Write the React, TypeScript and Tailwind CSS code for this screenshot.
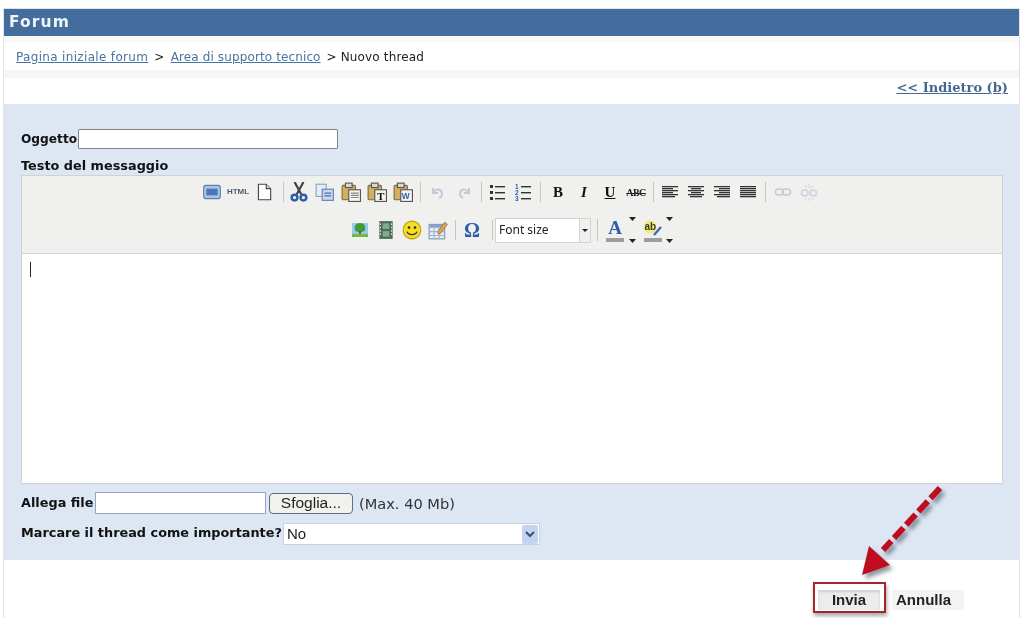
import React from "react";

const S = ({ children, size = 20 }: { children: React.ReactNode; size?: number }) => (
  <svg width={size} height={size} viewBox="0 0 18 18">{children}</svg>
);

const Lines = ({ rows, color = "#333" }: { rows: [number, number][]; color?: string }) => (
  <S size={18}>
    {rows.map(([x, w], i) => (
      <rect key={i} x={x} y={3 + i * 2} width={w} height={1.3} fill={color} />
    ))}
  </S>
);

const Slot = ({ children }: { children: React.ReactNode }) => (
  <span className="w-[26px] h-[20px] flex items-center justify-center shrink-0">{children}</span>
);

const Sep = () => (
  <span className="w-[9px] h-[20px] flex justify-end shrink-0">
    <span className="w-px h-[20px] bg-[#c4c4c4] mr-[2px]" />
  </span>
);

const SepLeft = () => (
  <span className="w-[9px] h-[20px] flex justify-end shrink-0">
    <span className="w-px h-[20px] bg-[#c4c4c4] mr-[4px]" />
  </span>
);

const SepTight = () => (
  <span className="w-[7px] h-[20px] flex justify-end shrink-0">
    <span className="w-px h-[20px] bg-[#c4c4c4] mr-[2px]" />
  </span>
);

const SepSmall = () => (
  <span className="w-[8px] h-[20px] flex justify-end shrink-0">
    <span className="w-px h-[20px] bg-[#c4c4c4] mr-[3px]" />
  </span>
);

const Clip = ({ inner }: { inner?: React.ReactNode }) => (
  <S>
    <rect x="1" y="3" width="12" height="13" rx="1" fill="#d2b060" stroke="#7d6a3c" />
    <rect x="4" y="1" width="6" height="4" fill="#d8d8d0" stroke="#55554a" />
    <rect x="7" y="7" width="10.5" height="10.5" fill="#f4f4f0" stroke="#555" />
    {inner}
  </S>
);

const Row1 = () => (
  <div className="flex items-center justify-center h-[20px] mr-[1px]">
    <Slot>
      <S>
        <rect x="1.5" y="3" width="15" height="12" rx="2" fill="#a9c3e4" stroke="#5f7fb0" />
        <rect x="4" y="6" width="10" height="6" fill="#4a76b8" />
      </S>
    </Slot>
    <Slot>
      <span className="text-[8px] font-bold text-[#4b5a78] [font-family:'Liberation_Sans',sans-serif]">HTML</span>
    </Slot>
    <Slot>
      <S>
        <path d="M4 2h7l4 4v10H4z" fill="#fff" stroke="#444" />
        <path d="M11 2v4h4" fill="#ddd" stroke="#444" />
      </S>
    </Slot>
    <Sep />
    <Slot>
      <S>
        <path d="M5 0l6 11M13 0L7 11" stroke="#444" strokeWidth="2" fill="none" />
        <circle cx="5" cy="14" r="2.6" fill="none" stroke="#2f5ea8" strokeWidth="2.2" />
        <circle cx="13" cy="14" r="2.6" fill="none" stroke="#2f5ea8" strokeWidth="2.2" />
      </S>
    </Slot>
    <Slot>
      <S>
        <rect x="1" y="2" width="9" height="11" fill="#e6ecf6" stroke="#8aa0c4" />
        <rect x="6.5" y="6.5" width="10" height="10" fill="#c9d8ee" stroke="#5f7fb0" />
        <path d="M8.5 10h6M8.5 12.5h6" stroke="#4a6ea8" />
      </S>
    </Slot>
    <Slot>
      <Clip inner={<path d="M9 10h7M9 12h7M9 14h7" stroke="#888" />} />
    </Slot>
    <Slot>
      <Clip inner={<text x="9" y="16" fontSize="10" fontWeight="700" fill="#111" fontFamily="Liberation Serif">T</text>} />
    </Slot>
    <Slot>
      <Clip inner={<text x="7.8" y="15.5" fontSize="7.5" fontWeight="700" fill="#2f5ea8" fontFamily="Liberation Sans">W</text>} />
    </Slot>
    <SepLeft />
    <Slot>
      <S size={18}>
        <path d="M4 5v5h5M4 10c2-4 8-5 9 0 .4 2-1 4-3 5" fill="none" stroke="#c3cbd6" strokeWidth="2" />
      </S>
    </Slot>
    <Slot>
      <S size={18}>
        <path d="M14 5v5H9M14 10c-2-4-8-5-9 0-.4 2 1 4 3 5" fill="none" stroke="#c3cbd6" strokeWidth="2" />
      </S>
    </Slot>
    <SepTight />
    <Slot>
      <S size={18}>
        <g fill="#333">
          <rect x="2" y="2" width="3" height="3" />
          <rect x="2" y="8" width="3" height="3" />
          <rect x="2" y="14" width="3" height="3" />
          <rect x="7" y="3" width="10" height="1.4" />
          <rect x="7" y="9" width="10" height="1.4" />
          <rect x="7" y="15" width="10" height="1.4" />
        </g>
      </S>
    </Slot>
    <Slot>
      <S size={18}>
        <g fill="#2f5ea8" fontSize="6.5" fontWeight="700" fontFamily="Liberation Sans">
          <text x="1" y="6">1</text>
          <text x="1" y="12">2</text>
          <text x="1" y="18">3</text>
        </g>
        <g fill="#333">
          <rect x="7" y="3" width="10" height="1.4" />
          <rect x="7" y="9" width="10" height="1.4" />
          <rect x="7" y="15" width="10" height="1.4" />
        </g>
      </S>
    </Slot>
    <SepLeft />
    <Slot><span className="text-[15px] font-bold text-[#111] [font-family:'Liberation_Serif',serif]">B</span></Slot>
    <Slot><span className="text-[15px] font-bold italic text-[#111] [font-family:'Liberation_Serif',serif]">I</span></Slot>
    <Slot><span className="text-[15px] font-bold underline text-[#111] [font-family:'Liberation_Serif',serif]">U</span></Slot>
    <Slot><span className="text-[10px] font-bold line-through text-[#222] tracking-tighter [font-family:'Liberation_Serif',serif]">ABC</span></Slot>
    <SepSmall />
    <Slot><Lines rows={[[1, 16], [1, 11], [1, 16], [1, 11], [1, 16], [1, 13]]} /></Slot>
    <Slot><Lines rows={[[1, 16], [4, 10], [1, 16], [4, 10], [1, 16], [3, 12]]} /></Slot>
    <Slot><Lines rows={[[1, 16], [6, 11], [1, 16], [6, 11], [1, 16], [4, 13]]} /></Slot>
    <Slot><Lines rows={[[1, 16], [1, 16], [1, 16], [1, 16], [1, 16], [1, 16]]} /></Slot>
    <SepLeft />
    <Slot>
      <S size={18}>
        <rect x="1.5" y="6" width="8" height="6" rx="3" fill="none" stroke="#c3cbd6" strokeWidth="1.6" />
        <rect x="8.5" y="6" width="8" height="6" rx="3" fill="none" stroke="#c3cbd6" strokeWidth="1.6" />
      </S>
    </Slot>
    <Slot>
      <S size={18}>
        <rect x="1.5" y="7" width="6.5" height="6" rx="3" fill="none" stroke="#ced4dc" strokeWidth="1.6" />
        <rect x="10" y="7" width="6.5" height="6" rx="3" fill="none" stroke="#ced4dc" strokeWidth="1.6" />
        <path d="M9 1v4M5 2l2 3M13 2l-2 3M9 15v3M6 15l-1 2M12 15l1 2" stroke="#d3d6d8" />
      </S>
    </Slot>
  </div>
);

const Arrows = () => (
  <span className="w-[12px] h-[26px] flex flex-col justify-between items-center shrink-0">
    <svg width="7" height="4"><path d="M0 0h7L3.5 4z" fill="#222" /></svg>
    <svg width="7" height="4"><path d="M0 0h7L3.5 4z" fill="#222" /></svg>
  </span>
);

const Row2 = () => (
  <div className="flex items-center justify-center h-[32px]">
    <Slot>
      <S size={18}>
        <rect x="1" y="2" width="16" height="14" fill="#9cc8ea" />
        <path d="M9 2c4 0 6 3 5 6 1 2-2 3-5 3S3 10 4 8C3 5 5 2 9 2z" fill="#3f9a3a" />
        <rect x="8" y="10" width="2" height="4" fill="#7a5a2c" />
        <rect x="1" y="13" width="16" height="3" fill="#6cbb3c" />
      </S>
    </Slot>
    <Slot>
      <S>
        <rect x="3" y="1" width="12" height="16" fill="#4d6b58" />
        <rect x="6" y="3" width="6" height="5" fill="#7fae8a" />
        <rect x="6" y="10" width="6" height="5" fill="#7fae8a" />
        <path d="M4 3v12M14 3v12" stroke="#d8e0d8" strokeWidth="1" strokeDasharray="1.5 1.5" />
      </S>
    </Slot>
    <Slot>
      <S>
        <circle cx="9" cy="9" r="8" fill="#f7dc20" stroke="#b99c20" />
        <circle cx="6.3" cy="6.8" r="1.2" fill="#333" />
        <circle cx="11.7" cy="6.8" r="1.2" fill="#333" />
        <path d="M4.5 10.5c1 3.5 8 3.5 9 0" fill="none" stroke="#333" strokeWidth="1.1" />
      </S>
    </Slot>
    <Slot>
      <S>
        <rect x="1" y="4" width="14" height="13" fill="#e8eef6" stroke="#7f97b8" />
        <rect x="1" y="4" width="14" height="3" fill="#86a4cc" />
        <path d="M1 10.5h14M1 14h14M5.5 7v10M10 7v10" stroke="#9fb3cc" />
        <path d="M9 10l6-8 2.5 1.8L11.5 12 9 12.5z" fill="#e0a050" stroke="#8a6a30" strokeWidth=".6" />
      </S>
    </Slot>
    <SepLeft />
    <Slot>
      <span className="text-[20px] font-bold leading-none text-[#2f5ea8] [font-family:'Liberation_Serif',serif] mr-[2px]">Ω</span>
    </Slot>
    <Sep />
    <div className="w-[96px] h-[25px] bg-white border border-[#d4d4d0] flex items-center shrink-0">
      <span className="flex-1 pl-[3px] text-[12px] text-[#222] [font-family:'Noto_Sans',sans-serif]">Font size</span>
      <span className="w-[11px] h-full border-l border-[#d4d4d0] bg-[#f0f0ee] flex items-center justify-center">
        <svg width="6" height="3"><path d="M0 0h6L3 3z" fill="#222" /></svg>
      </span>
    </div>
    <span className="w-[6px] h-[22px] ml-[3px] mr-[4px] flex justify-end shrink-0"><span className="w-px h-full bg-[#c4c4c4] mr-[2px]" /></span>
    <span className="w-[22px] h-[24px] flex flex-col items-center shrink-0">
      <span className="text-[19px] font-bold leading-[20px] text-[#2f5ea8] [font-family:'Liberation_Serif',serif]">A</span>
      <span className="w-[18px] h-[4px] bg-[#9d9d9d]" />
    </span>
    <Arrows />
    <span className="w-[5px] shrink-0" />
    <span className="w-[20px] h-[24px] flex flex-col items-center shrink-0">
      <svg width="20" height="20" viewBox="0 0 20 20">
        <circle cx="7" cy="9" r="6.5" fill="#f2ec80" />
        <text x="1.5" y="12" fontSize="10" fontWeight="700" fill="#3a3a20" fontFamily="Liberation Sans">ab</text>
        <path d="M11 17l7-8" stroke="#3f6bb0" strokeWidth="2.4" />
      </svg>
      <span className="w-[18px] h-[4px] bg-[#9d9d9d]" />
    </span>
    <Arrows />
  </div>
);

export default function App() {
  return (
    <div className="relative w-[1024px] h-[618px] overflow-hidden bg-white pt-[8px] pl-[3px] pr-[4px] [font-family:'DejaVu_Sans',sans-serif] blur-[0.35px]">
      <div className="h-full border-l border-r border-t border-[#dfe4ea] bg-white flex flex-col">
        <div className="h-[27px] bg-[#436d9c] flex items-center pl-[5px] pt-[1px] text-[15.5px] font-bold text-[#eef3f8] tracking-[1.1px] shrink-0">
          Forum
        </div>
        <div className="h-[6px] bg-[#f8f8f8] shrink-0" />
        <div className="h-[28px] flex items-center pt-[1px] pl-[12px] text-[12px] text-[#222] shrink-0 whitespace-pre tracking-[0.33px]">
          <span className="text-[#48749f] underline">Pagina iniziale forum</span>
          <span className="mx-[6px]">&gt;</span>
          <span className="text-[#48749f] underline tracking-[0.12px]">Area di supporto tecnico</span>
          <span className="ml-[6px] tracking-[0.15px]">&gt; Nuovo thread</span>
        </div>
        <div className="h-[8px] bg-[#f6f6f6] shrink-0" />
        <div className="h-[26px] flex items-center justify-end pr-[11px] pb-[6px] shrink-0">
          <span className="text-[13px] font-bold text-[#44688f] underline [font-family:'DejaVu_Serif',serif]">&lt;&lt; Indietro (b)</span>
        </div>
        <div className="h-[456px] bg-[#dde7f4] pl-[17px] pr-[16px] pt-[25px] flex flex-col shrink-0">
          <div className="flex items-center h-[20px] text-[12.85px] font-bold text-[#111]">
            <span className="w-[57px] shrink-0 text-[12.2px]">Oggetto</span>
            <span className="w-[260px] h-[20px] bg-white border border-[#7f8488] rounded-[1px]" />
          </div>
          <div className="h-[26px] flex items-end text-[12.85px] font-bold text-[#111]">Testo del messaggio</div>
          <div className="w-[982px] border border-[#cfd3d6] bg-white flex flex-col">
            <div className="h-[78px] bg-[#f0f0ee] border-b border-[#d2d4d6] flex flex-col items-center pt-[6px] gap-[12px] pr-[2px]">
              <Row1 />
              <Row2 />
            </div>
            <div className="h-[229px] pl-[8px] pt-[8px]">
              <div className="w-px h-[15px] bg-[#222]" />
            </div>
          </div>
          <div className="flex items-center h-[22px] mt-[8px] text-[12.85px] font-bold text-[#111]">
            <span className="w-[74px] shrink-0">Allega file</span>
            <span className="w-[171px] h-[22px] bg-white border border-[#8fa9c6] shrink-0" />
            <span className="ml-[3px] w-[84px] h-[21px] bg-[#f1f1ee] border border-[#5d6f80] rounded-[4px] flex items-center justify-center text-[15.5px] font-normal text-[#222] [font-family:'Liberation_Sans',sans-serif]">Sfoglia...</span>
            <span className="ml-[6px] pt-[1px] text-[14.6px] font-normal text-[#333]">(Max. 40 Mb)</span>
          </div>
          <div className="flex items-center h-[22px] mt-[9px] text-[12.85px] font-bold text-[#111]">
            <span className="w-[262px] pb-[2px] shrink-0 whitespace-nowrap">Marcare il thread come importante?</span>
            <span className="w-[257px] h-[22px] bg-white border border-[#c5d0de] flex items-center shrink-0">
              <span className="flex-1 pl-[3px] text-[15px] font-normal text-[#222] [font-family:'Liberation_Sans',sans-serif]">No</span>
              <span className="w-[16px] h-[19px] mr-[1px] bg-[#c4d4f0] rounded-[2px] flex items-center justify-center">
                <svg width="10" height="7" viewBox="0 0 10 7"><path d="M1 1l4 4 4-4" fill="none" stroke="#35507e" strokeWidth="2" /></svg>
              </span>
            </span>
          </div>
        </div>
        <div className="flex-1 flex items-start justify-end pt-[30px] pr-[55px]">
          <span className="w-[62px] h-[20px] mr-[12px] bg-[#ececec] flex items-center justify-center text-[15px] font-bold text-[#222] [font-family:'Liberation_Sans',sans-serif] shadow-[inset_0_2px_3px_#cfcfcf]">Invia</span>
          <span className="w-[72px] h-[20px] pl-[4px] bg-[#f3f3f3] flex items-center text-[15px] font-bold text-[#222] [font-family:'Liberation_Sans',sans-serif]">Annulla</span>
        </div>
      </div>

      <div className="absolute left-[813px] top-[582px] w-[73px] h-[31px] border-2 border-[#a8232a] shadow-[1px_3px_4px_#aaa]" />
      <svg className="absolute left-[850px] top-[480px] drop-shadow-[3px_4px_2px_rgba(70,80,95,0.6)]" width="110" height="110" viewBox="0 0 110 110">
        <path d="M90 8L33 70" fill="none" stroke="#c00d1e" strokeWidth="6" strokeDasharray="14 4" />
        <path d="M19 66L12 95l28-10z" fill="#c00d1e" />
      </svg>
    </div>
  );
}
